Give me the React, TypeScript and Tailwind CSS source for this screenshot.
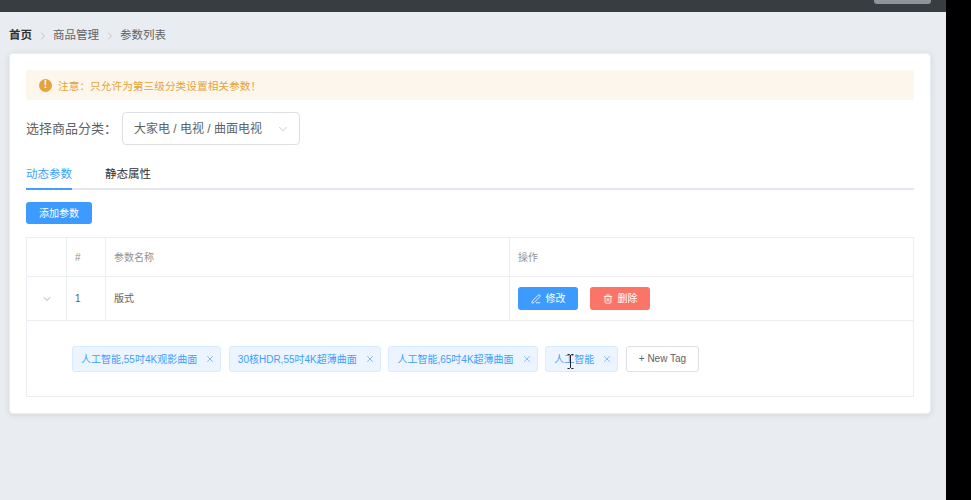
import { ChevronDown, ChevronRight, PenLine, Trash2, X } from 'lucide-react';

const tags = ['人工智能,55吋4K观影曲面', '30核HDR,55吋4K超薄曲面', '人工智能,65吋4K超薄曲面', '人工智能'];

export default function App() {
    return (
        <div className="flex h-[500px] w-[971px] overflow-hidden bg-black font-['Liberation_Sans','Noto_Sans_CJK_SC',sans-serif]">
            <div className="flex w-[946px] flex-col bg-[#e9edf1]">
                {/* Header */}
                <div className="flex h-3 justify-end bg-[#373d41] pr-[15px]">
                    <div className="h-1 w-[57px] rounded-b-[3px] bg-[#909399]" />
                </div>

                <div className="pl-[9px] pt-[17px]">
                    {/* Breadcrumb */}
                    <div className="flex h-[14px] items-center text-[11.5px] text-[#606266]">
                        <span className="font-bold text-[#303133]">首页</span>
                        <ChevronRight className="mx-[4.5px] h-3 w-3 text-[#c0c4cc]" />
                        <span>商品管理</span>
                        <ChevronRight className="mx-[4.5px] h-3 w-3 text-[#c0c4cc]" />
                        <span>参数列表</span>
                    </div>

                    {/* Card */}
                    <div className="mt-[10px] h-[361px] w-[922px] rounded-[4px] border border-[#ebeef5] bg-white px-4 pt-4 shadow-[0_1px_6px_rgba(0,0,0,0.1)]">
                        <div className="flex h-[30px] items-center rounded-[3px] bg-[#fdf6ec] px-[13px] text-[10.7px] text-[#e6a23c]">
                            <span className="mr-[6px] flex h-[13px] w-[13px] items-center justify-center rounded-full bg-[#e6a23c] text-[10px] font-bold leading-none text-white">!</span>
                            <span className="pt-[2px]">注意：只允许为第三级分类设置相关参数！</span>
                        </div>

                        <div className="mt-3 flex items-center">
                            <span className="mr-[5px] text-[13px] text-[#606266]">选择商品分类：</span>
                            <div className="flex h-[33px] w-[178px] items-center justify-between rounded-[4px] border border-[#dcdfe6] pl-[11px] pr-[9px] text-[12px] text-[#606266]">
                                <span>大家电 / 电视 / 曲面电视</span>
                                <ChevronDown className="h-[14px] w-[14px] text-[#c0c4cc]" strokeWidth={1.5} />
                            </div>
                        </div>

                        {/* Tabs */}
                        <div className="mt-[14px] flex h-[31px] border-b-2 border-[#e4e7ed] text-[11.5px]">
                            <div className="-mb-0.5 flex h-[31px] items-center border-b-2 border-[#409eff] pt-[2px] text-[#409eff]">动态参数</div>
                            <div className="ml-[33px] flex h-[29px] items-center pt-[2px] text-[#303133]">静态属性</div>
                        </div>

                        <button className="mt-3 h-[22px] w-[66px] rounded-[3px] bg-[#3d9bff] text-[10px] text-white">添加参数</button>

                        {/* Table */}
                        <div className="mt-[13px] border border-[#ebeef5] text-[10px] text-[#606266]">
                            <div className="grid h-[39px] grid-cols-[40px_39px_404px_1fr] items-stretch border-b border-[#ebeef5] text-[#909399]">
                                <div className="border-r border-[#ebeef5]" />
                                <div className="flex items-center border-r border-[#ebeef5] pl-2">#</div>
                                <div className="flex items-center border-r border-[#ebeef5] pl-2">参数名称</div>
                                <div className="flex items-center pl-2">操作</div>
                            </div>
                            <div className="grid h-[44px] grid-cols-[40px_39px_404px_1fr] items-stretch border-b border-[#ebeef5]">
                                <div className="flex items-center justify-center border-r border-[#ebeef5]">
                                    <ChevronDown className="h-3 w-3 text-[#909399]" strokeWidth={1.5} />
                                </div>
                                <div className="flex items-center border-r border-[#ebeef5] pl-2">1</div>
                                <div className="flex items-center border-r border-[#ebeef5] pl-2">版式</div>
                                <div className="flex items-center gap-3 pl-2">
                                    <button className="flex h-[23px] w-[60px] items-center justify-center gap-[5px] rounded-[3px] bg-[#3d9bff] text-white">
                                        <PenLine className="h-[10px] w-[10px]" />
                                        修改
                                    </button>
                                    <button className="flex h-[23px] w-[60px] items-center justify-center gap-[5px] rounded-[3px] bg-[#fb7468] text-white">
                                        <Trash2 className="h-[10px] w-[10px]" />
                                        删除
                                    </button>
                                </div>
                            </div>
                            <div className="flex h-[75px] items-center gap-[7.7px] pl-[45px]">
                                {tags.map((tag, i) => (
                                    <span key={tag} className="relative flex h-[26px] items-center rounded-[3px] border border-[#d9ecff] bg-[#ecf5ff] pl-2 pr-[5px] text-[10px] text-[#409eff]">
                                        <span className="pt-px">{tag}</span>
                                        <X className="ml-2 h-[10px] w-[10px]" strokeWidth={1.5} />
                                        {i === 3 && (
                                            <svg className="absolute left-[21px] top-[7px] h-[15px] w-[7px]" viewBox="0 0 7 15" fill="none" stroke="#222" strokeWidth="1">
                                                <path d="M0.5 0.5h2l1 1 1-1h2M3.5 1.5v12M0.5 14.5h2l1-1 1 1h2" />
                                            </svg>
                                        )}
                                    </span>
                                ))}
                                <button className="h-[26px] w-[73px] rounded-[3px] border border-[#dcdfe6] bg-white text-[10px] text-[#606266]">+ New Tag</button>
                            </div>
                        </div>
                    </div>
                </div>
            </div>
        </div>
    );
}
